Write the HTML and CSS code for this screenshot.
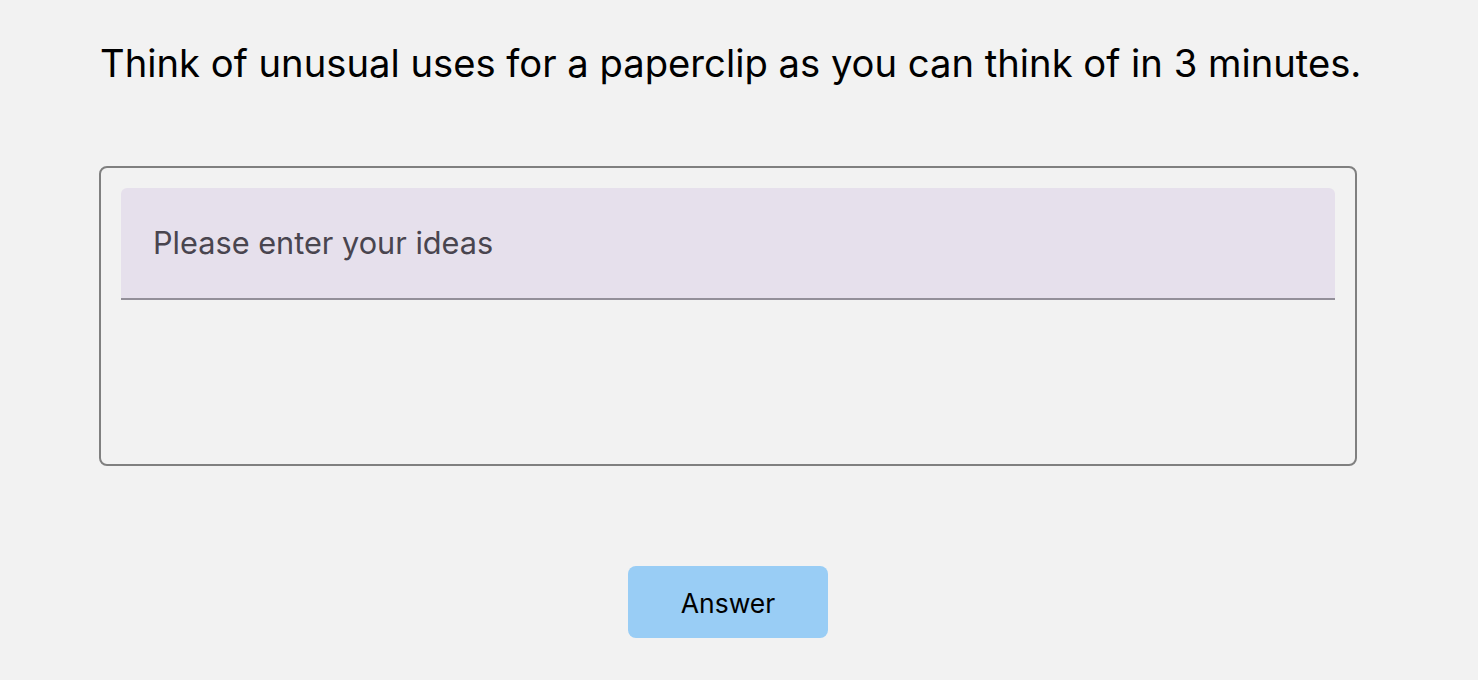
FILE: index.html
```html
<!DOCTYPE html>
<html>
<head>
<meta charset="utf-8">
<link rel="stylesheet" href="styles.css">
</head>
<body>
<main class="page">
  <h1 class="prompt">Think of unusual uses for a paperclip as you can think of in 3 minutes.</h1>
  <div class="answer-box">
    <div class="field">
      <span class="placeholder">Please enter your ideas</span>
    </div>
  </div>
  <div class="actions">
    <button class="answer-btn">Answer</button>
  </div>
</main>
</body>
</html>
```
FILE: styles.css
```css
html, body {
  margin: 0;
  padding: 0;
  background: #f2f2f2;
  font-family: Inter, "Liberation Sans", Arial, sans-serif;
}
.page {
  width: 1258px;
  margin: 0 0 0 99px;
  padding-top: 39px;
}
.prompt {
  margin: 0;
  font-size: 38.2px;
  font-weight: 400;
  line-height: 49px;
  color: #000;
  padding-left: 1px;
  white-space: nowrap;
}
.answer-box {
  margin-top: 78px;
  height: 300px;
  border: 2px solid #808080;
  border-radius: 8px;
  padding: 20px;
  box-sizing: border-box;
}
.field {
  height: 112px;
  background: #e6e0ec;
  border-radius: 6px 6px 0 0;
  border-bottom: 2px solid #938f99;
  box-sizing: border-box;
  display: flex;
  align-items: center;
  padding-left: 32px;
  padding-bottom: 2px;
}
.placeholder {
  font-size: 30.7px;
  color: #49454f;
  white-space: nowrap;
}
.actions {
  display: flex;
  justify-content: center;
  margin-top: 100px;
}
.answer-btn {
  width: 200px;
  height: 72px;
  border: none;
  border-radius: 8px;
  background: #99cdf5;
  font-family: Inter, "Liberation Sans", Arial, sans-serif;
  font-size: 26.5px;
  color: #000;
  padding-top: 2px;
}
```
